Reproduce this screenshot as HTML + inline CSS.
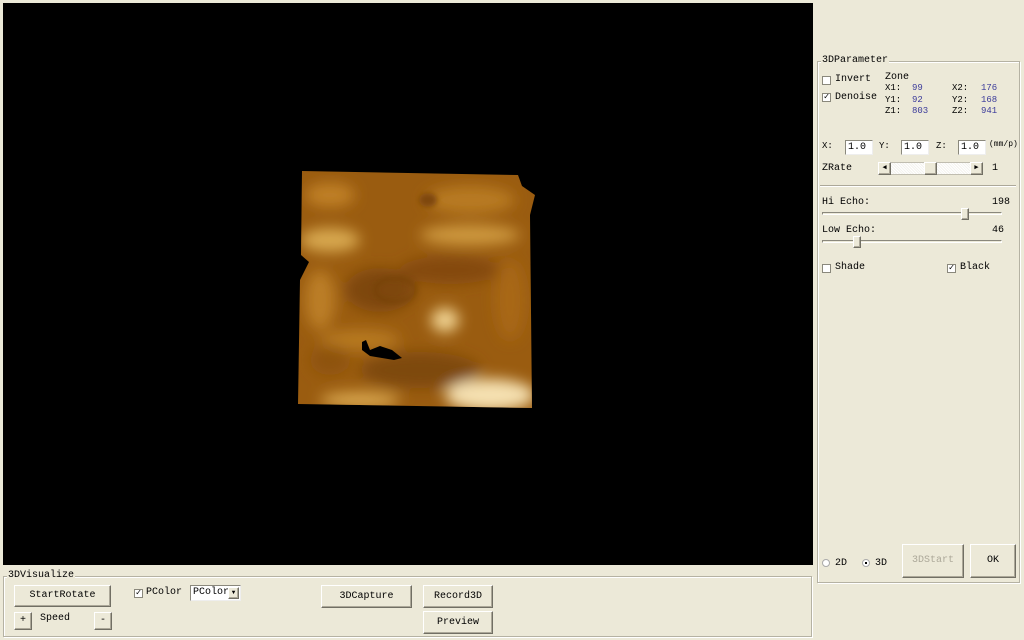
<!DOCTYPE html>
<html><head><meta charset="utf-8"><style>
*{margin:0;padding:0;box-sizing:border-box}
body{width:1024px;height:640px;background:#ece9d8;position:relative;overflow:hidden;font-family:"Liberation Mono","DejaVu Sans Mono",monospace;font-size:10px;color:#000}
.a{position:absolute;white-space:nowrap}
.blk{position:absolute;left:3px;top:3px;width:810px;height:562px;background:#000}
.grp{position:absolute;border:1px solid #b5b2a3;box-shadow:1px 1px 0 #fff inset,1px 1px 0 #fff}
.gl{position:absolute;background:#ece9d8;padding:0 1px;font-size:10px}
.btn{position:absolute;background:#ece9d8;border:1px solid;border-color:#fff #716f64 #716f64 #fff;box-shadow:inset -1px -1px 0 #aca899;text-align:center;font-size:10px}
.cb{position:absolute;width:9px;height:9px;border:1px solid #8a887c;background:#fff;font-size:9px;line-height:7px;text-align:center}
.num{color:#3a3a9a}
.inp{position:absolute;background:#fff;border:1px solid #8a887c;border-right-color:#eee;border-bottom-color:#eee;font-size:10px;padding-left:2px;line-height:13px}
</style></head><body>
<div class="blk"></div>
<svg class="a" style="left:0;top:0" width="814" height="566">
<defs>
<clipPath id="c"><polygon points="302,171 518,175 522,186 535,195 530,215 532,408 298,404 300,280 309,262 301,255"/></clipPath>
<filter id="b"><feGaussianBlur stdDeviation="7"/></filter>
<filter id="b2"><feGaussianBlur stdDeviation="3"/></filter>
</defs>
<g clip-path="url(#c)">
<rect x="290" y="165" width="250" height="250" fill="#9a5c10"/>
<g filter="url(#b)">
<ellipse cx="330" cy="195" rx="25" ry="12" fill="#c08025"/>
<ellipse cx="470" cy="200" rx="45" ry="14" fill="#b87a20"/>
<ellipse cx="330" cy="240" rx="30" ry="12" fill="#d8a850"/>
<ellipse cx="470" cy="235" rx="50" ry="10" fill="#cf9a40"/>
<ellipse cx="380" cy="290" rx="35" ry="22" fill="#7e4608"/>
<ellipse cx="450" cy="270" rx="50" ry="14" fill="#84490a"/>
<ellipse cx="445" cy="320" rx="14" ry="12" fill="#f0d290"/>
<ellipse cx="360" cy="340" rx="40" ry="10" fill="#b87a22"/>
<ellipse cx="420" cy="370" rx="60" ry="18" fill="#7e480b"/>
<ellipse cx="490" cy="395" rx="45" ry="16" fill="#f5e0b0"/>
<ellipse cx="360" cy="400" rx="40" ry="8" fill="#d9a750"/>
<ellipse cx="320" cy="300" rx="15" ry="30" fill="#bb7e28"/>
<ellipse cx="510" cy="300" rx="15" ry="40" fill="#a86814"/>
<ellipse cx="330" cy="360" rx="20" ry="15" fill="#8e520e"/>
</g>
<g filter="url(#b2)">
<ellipse cx="428" cy="200" rx="9" ry="7" fill="#7e4608"/>
<ellipse cx="395" cy="290" rx="20" ry="12" fill="none" stroke="#6e3e06" stroke-width="2"/>
</g>
<path d="M362,342 L366,340 L370,350 L380,346 L392,350 L402,358 L394,360 L382,358 L370,356 L362,350Z" fill="#000"/>
</g>
</svg>

<div class="grp" style="left:817px;top:61px;width:203px;height:522px"></div>
<div class="gl a" style="left:821px;top:55px">3DParameter</div>
<div class="cb" style="left:822px;top:76px"></div><div class="a" style="left:835px;top:74px">Invert</div>
<div class="cb" style="left:822px;top:93px">✓</div><div class="a" style="left:835px;top:92px">Denoise</div>
<div class="a" style="left:885px;top:72px">Zone</div>
<div class="a" style="left:885px;top:83px;font-size:9px;line-height:11.5px">X1:<br>Y1:<br>Z1:</div>
<div class="a num" style="left:912px;top:83px;font-size:9px;line-height:11.5px">99<br>92<br>803</div>
<div class="a" style="left:952px;top:83px;font-size:9px;line-height:11.5px">X2:<br>Y2:<br>Z2:</div>
<div class="a num" style="left:981px;top:83px;font-size:9px;line-height:11.5px">176<br>168<br>941</div>
<div class="a" style="left:822px;top:141px;font-size:9px">X:</div>
<div class="inp" style="left:845px;top:140px;width:28px;height:15px">1.0</div>
<div class="a" style="left:879px;top:141px;font-size:9px">Y:</div>
<div class="inp" style="left:901px;top:140px;width:28px;height:15px">1.0</div>
<div class="a" style="left:936px;top:141px;font-size:9px">Z:</div>
<div class="inp" style="left:958px;top:140px;width:28px;height:15px">1.0</div>
<div class="a" style="left:989px;top:140px;font-size:8px">(mm/p)</div>
<div class="a" style="left:822px;top:163px">ZRate</div>
<div class="a" style="left:878px;top:162px;width:105px;height:13px;background:repeating-linear-gradient(45deg,#f4f3ee 0 1px,#fff 1px 2px);border:1px solid #c0bdb0"></div>
<div class="btn" style="left:878px;top:162px;width:13px;height:13px;font-size:7px;line-height:11px">◀</div>
<div class="btn" style="left:970px;top:162px;width:13px;height:13px;font-size:7px;line-height:11px">▶</div>
<div class="btn" style="left:924px;top:162px;width:13px;height:13px"></div>
<div class="a" style="left:992px;top:163px">1</div>
<div class="a" style="left:820px;top:185px;width:196px;height:2px;border-top:1px solid #aca899;border-bottom:1px solid #fff"></div>
<div class="a" style="left:822px;top:197px">Hi Echo:</div><div class="a" style="left:992px;top:197px">198</div>
<div class="a" style="left:822px;top:212px;width:180px;height:3px;border:1px solid;border-color:#8a887c #fff #fff #8a887c"></div>
<div class="btn" style="left:961px;top:208px;width:8px;height:12px"></div>
<div class="a" style="left:822px;top:225px">Low Echo:</div><div class="a" style="left:992px;top:225px">46</div>
<div class="a" style="left:822px;top:240px;width:180px;height:3px;border:1px solid;border-color:#8a887c #fff #fff #8a887c"></div>
<div class="btn" style="left:853px;top:236px;width:8px;height:12px"></div>
<div class="cb" style="left:822px;top:264px"></div><div class="a" style="left:835px;top:262px">Shade</div>
<div class="cb" style="left:947px;top:264px">✓</div><div class="a" style="left:960px;top:262px">Black</div>
<div class="a" style="left:822px;top:559px;width:8px;height:8px;border-radius:50%;background:#fff;border:1px solid #aaa"></div>
<div class="a" style="left:835px;top:558px">2D</div>
<div class="a" style="left:862px;top:559px;width:8px;height:8px;border-radius:50%;background:#fff;border:1px solid #aaa"><div style="margin:2px;width:2px;height:2px;background:#000"></div></div>
<div class="a" style="left:875px;top:558px">3D</div>
<div class="btn" style="left:902px;top:544px;width:62px;height:34px;line-height:32px;color:#aca899">3DStart</div>
<div class="btn" style="left:970px;top:544px;width:46px;height:34px;line-height:32px">OK</div>

<div class="grp" style="left:3px;top:576px;width:809px;height:61px"></div>
<div class="gl a" style="left:7px;top:570px">3DVisualize</div>
<div class="btn" style="left:14px;top:585px;width:97px;height:22px;line-height:20px">StartRotate</div>
<div class="btn" style="left:14px;top:612px;width:18px;height:18px;line-height:16px">+</div>
<div class="a" style="left:40px;top:613px">Speed</div>
<div class="btn" style="left:94px;top:612px;width:18px;height:18px;line-height:16px">-</div>
<div class="cb" style="left:134px;top:589px">✓</div><div class="a" style="left:146px;top:587px">PColor</div>
<div class="inp" style="left:190px;top:585px;width:51px;height:16px;font-size:10px">PColor<span class="btn" style="right:1px;top:1px;width:11px;height:12px;font-size:6px;line-height:10px">▼</span></div>
<div class="btn" style="left:321px;top:585px;width:91px;height:23px;line-height:21px">3DCapture</div>
<div class="btn" style="left:423px;top:585px;width:70px;height:23px;line-height:21px">Record3D</div>
<div class="btn" style="left:423px;top:611px;width:70px;height:23px;line-height:21px">Preview</div>
</body></html>
